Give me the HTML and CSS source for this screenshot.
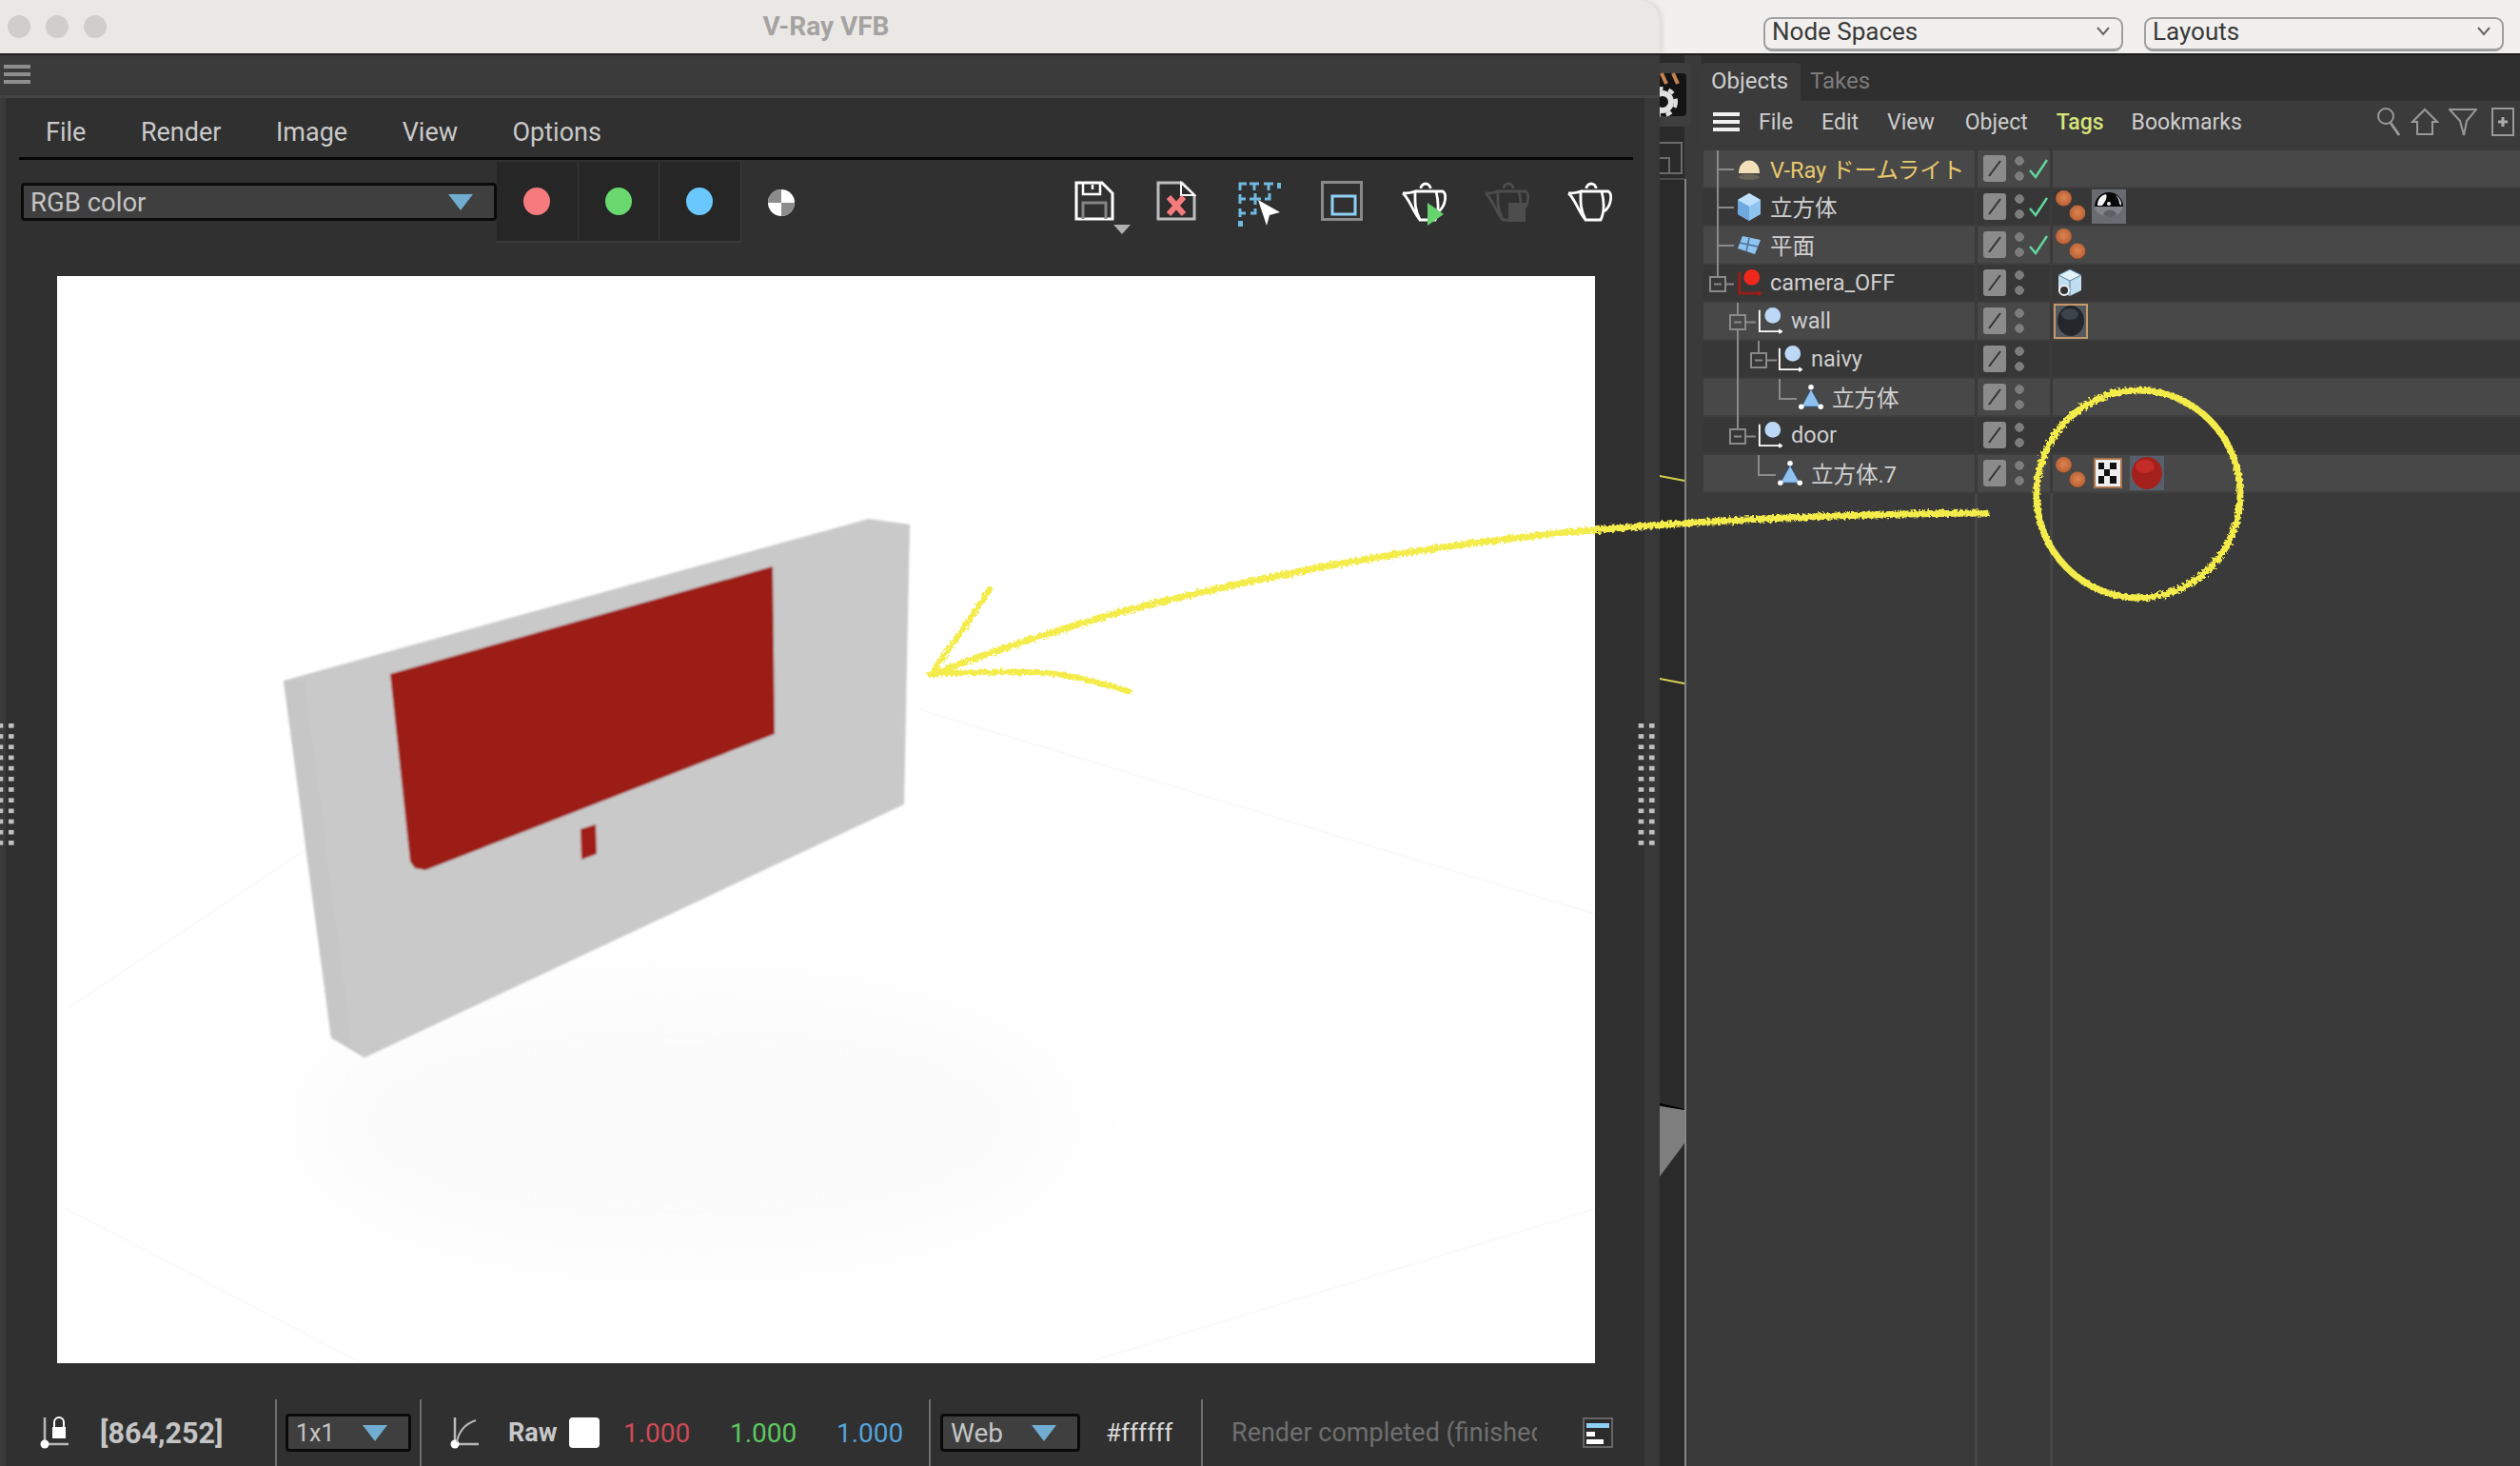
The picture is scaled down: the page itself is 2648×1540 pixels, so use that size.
FILE: index.html
```html
<!DOCTYPE html>
<html lang="en">
<head>
<meta charset="utf-8">
<title>V-Ray VFB</title>
<link rel="stylesheet" href="styles.css">
</head>
<body>
<svg class="defs" width="0" height="0">
  <defs>
    <radialGradient id="ballGrad" cx=".5" cy=".45" r=".55"><stop offset="0" stop-color="#dd8452"/><stop offset=".85" stop-color="#bd6438"/><stop offset="1" stop-color="#5e3620"/></radialGradient>
    <symbol id="balls" viewBox="0 0 32 34"><circle cx="8.500" cy="8.500" r="8.500" fill="url(#ballGrad)"/><circle cx="23" cy="24" r="8.500" fill="url(#ballGrad)"/></symbol>
    <symbol id="null" viewBox="0 0 28 30"><path d="M2 3V27H26M24 25l3 2-3 2" fill="none" stroke="#fff" stroke-width="2"/><circle cx="17" cy="9" r="9" fill="#bcd8f6"/></symbol>
    <symbol id="poly" viewBox="0 0 28 30"><path d="M14 6 3 26H25Z" fill="#8fc0ee" stroke="#2c4a6e" stroke-width="1"/><circle cx="14" cy="4" r="3" fill="#fff"/><circle cx="3" cy="26" r="3" fill="#fff"/><circle cx="25" cy="26" r="3" fill="#fff"/></symbol>
    <symbol id="slash" viewBox="0 0 24 28"><rect width="24" height="28" rx="3" fill="#8b8b8b"/><path d="M6 22 18 6" stroke="#333" stroke-width="2"/></symbol>
    <symbol id="check" viewBox="0 0 20 22"><path d="M1 13 7 20 19 2" fill="none" stroke="#62d69c" stroke-width="2.500"/></symbol>
    <symbol id="teapot" viewBox="0 0 48 42"><path d="M21 7a5 5 0 0 1 10 0M16 10H36M2 12Q10 12 15 10C15 20 14 28 20 40H36C41 30 39 18 37 10H44C48 12 48 24 40 31M2 12C8 16 12 30 20 40" fill="none" stroke="currentColor" stroke-width="2.800"/></symbol>
    <filter id="soft"><feGaussianBlur stdDeviation="1.100"/></filter>
    <filter id="shadow"><feGaussianBlur stdDeviation="60"/></filter>
    <filter id="rough" x="-5%" y="-5%" width="110%" height="110%"><feTurbulence type="fractalNoise" baseFrequency=".35" numOctaves="2" seed="3"/><feDisplacementMap in="SourceGraphic" scale="6"/></filter>
  </defs>
</svg>

<div class="screen">
  <section class="vfb">
    <header class="titlebar">
      <div class="lights"><i class="light"></i><i class="light"></i><i class="light"></i></div>
      <span class="wintitle">V-Ray VFB</span>
    </header>
    <div class="hambar"><div class="ham ham-grey"><i></i><i></i><i></i></div></div>
    <div class="vfbbody">
      <nav class="menu"><span>File</span><span>Render</span><span>Image</span><span>View</span><span>Options</span></nav>
      <div class="toolbar">
        <div class="select rgb"><span>RGB color</span><i class="tri"></i></div>
        <div class="chan"><i class="dot red"></i></div>
        <div class="chan"><i class="dot green"></i></div>
        <div class="chan"><i class="dot blue"></i></div>
        <div class="chan plain"><svg width="28" height="28" viewBox="0 0 28 28"><circle cx="14" cy="14" r="14" fill="#fff"/><path d="M14 14V0A14 14 0 0 0 0 14ZM14 14H28A14 14 0 0 1 14 28Z" fill="#8c8c8c"/></svg></div>
        <div class="tools">
          <div class="tool save">
            <svg width="42" height="42" viewBox="0 0 42 42"><path d="M2 2H29L40 13V40H2Z" fill="none" stroke="#fff" stroke-width="3"/><path d="M9 2V14H27V2M19 4V9" fill="none" stroke="#fff" stroke-width="2.500"/><path d="M9 40V23H33V40" fill="none" stroke="#858585" stroke-width="3"/></svg>
            <i class="savetri"></i>
          </div>
          <div class="tool">
            <svg width="42" height="42" viewBox="0 0 42 42"><path d="M2 2H27L40 15V40H2Z" fill="#2c2c2c" stroke="#bdbdbd" stroke-width="3"/><path d="M26 2V15H40Z" fill="#2c2c2c" stroke="#fff" stroke-width="2"/><path d="M13 17 29 35M29 17 13 35" stroke="#f57b7d" stroke-width="6"/></svg>
          </div>
          <div class="tool">
            <svg width="46" height="48" viewBox="0 0 46 48"><path d="M3 10V3H10M13 3H23M18 3V10M28 3H38M33 3V10M3 14V24M3 19H9M13 19H25M19 13V25M29 19H34V13M3 29V38M3 34H9M19 29V34H14" fill="none" stroke="#6fb9e0" stroke-width="3"/><rect x="42" y="2" width="4" height="6" fill="#6fb9e0"/><rect x="1" y="42" width="5" height="6" fill="#6fb9e0"/><path d="M22 20 45 33 34 36 31 47Z" fill="#fff"/></svg>
          </div>
          <div class="tool">
            <svg width="44" height="42" viewBox="0 0 44 42"><rect x="1.500" y="1.500" width="41" height="39" fill="none" stroke="#8a8a8a" stroke-width="3"/><rect x="12" y="16" width="24" height="19" fill="none" stroke="#8fd0f5" stroke-width="3"/></svg>
          </div>
          <div class="tool teapotbtn">
            <svg width="50" height="46" viewBox="0 0 50 46"><use href="#teapot" width="48" height="42"/><path d="M28 22 45 34 28 46Z" fill="#65d46e"/></svg>
          </div>
          <div class="tool teapotbtn dim">
            <svg width="50" height="46" viewBox="0 0 50 46"><use href="#teapot" width="48" height="42"/><rect x="26" y="22" width="18" height="20" fill="#4d4d4d"/></svg>
          </div>
          <div class="tool teapotbtn">
            <svg width="50" height="46" viewBox="0 0 50 46"><use href="#teapot" width="48" height="42"/></svg>
          </div>
        </div>
      </div>

      <div class="render">
        <svg width="1616" height="1142" viewBox="60 290 1616 1142">
          <rect x="60" y="290" width="1616" height="1142" fill="#fff"/>
          <ellipse cx="720" cy="1180" rx="420" ry="150" fill="#fbfbfb" filter="url(#shadow)"/>
          <path d="M965 745 1676 960M70 1270 380 1432M1140 1432 1676 1270M70 1060 340 880" stroke="#fafafa" stroke-width="2" fill="none"/>
          <g filter="url(#soft)">
            <path d="M298 715 913 545 956 551 950 845 383 1111 348 1090Z" fill="#c9c9c9"/>
            <path d="M298 715 348 1090 383 1111 370 1100 320 715Z" fill="#c6c6c6"/>
            <path d="M410 708 812 595 814 771 447 914 436 912 431 905Z" fill="#9c1a12"/>
            <path d="M610 871 626 866 627 897 611 903Z" fill="#a01c14"/>
          </g>
        </svg>
      </div>

      <footer class="status">
        <svg class="s-lock" width="30" height="34" viewBox="0 0 30 34"><path d="M5 1V30M5 29H30" stroke="#b8b8b8" stroke-width="2.500" fill="none"/><circle cx="5" cy="29" r="4.500" fill="#fff"/><rect x="13" y="11" width="14" height="12" fill="#fff"/><path d="M15 11V6a5 5 0 0 1 10 0V11" fill="none" stroke="#fff" stroke-width="2"/></svg>
        <span class="s-coord">[864,252]</span>
        <i class="sep s-sep1"></i>
        <div class="select small s-1x1"><span>1x1</span><i class="tri"></i></div>
        <i class="sep s-sep2"></i>
        <svg class="s-curve" width="30" height="34" viewBox="0 0 30 34"><path d="M5 1V30M5 29H30" stroke="#b8b8b8" stroke-width="2.500" fill="none"/><circle cx="5" cy="29" r="4.500" fill="#fff"/><path d="M7 27C9 16 15 8 27 4" stroke="#b8b8b8" stroke-width="2" fill="none"/></svg>
        <span class="s-raw">Raw</span>
        <i class="s-swatch"></i>
        <span class="val v-red">1.000</span>
        <span class="val v-green">1.000</span>
        <span class="val v-blue">1.000</span>
        <i class="sep s-sep3"></i>
        <div class="select small s-web"><span>Web</span><i class="tri"></i></div>
        <span class="s-hex">#ffffff</span>
        <i class="sep s-sep4"></i>
        <span class="s-msg">Render completed (finished</span>
        <svg class="s-log" width="32" height="32" viewBox="0 0 32 32"><rect x="1" y="1" width="30" height="30" fill="#2b2b2b" stroke="#666" stroke-width="2"/><rect x="4" y="6" width="24" height="5" fill="#8fd0f5"/><rect x="4" y="15" width="9" height="5" fill="#fff"/><rect x="4" y="23" width="18" height="5" fill="#fff"/></svg>
      </footer>
      <div class="grip grip-l"></div>
      <div class="grip grip-r"></div>
    </div>
  </section>

  <section class="right">
    <div class="topbar">
      <div class="mac-select"><span>Node Spaces</span><svg width="14" height="10" viewBox="0 0 14 10"><path d="M1 1 7 8 13 1" fill="none" stroke="#666" stroke-width="2"/></svg></div>
      <div class="mac-select"><span>Layouts</span><svg width="14" height="10" viewBox="0 0 14 10"><path d="M1 1 7 8 13 1" fill="none" stroke="#666" stroke-width="2"/></svg></div>
    </div>
    <div class="workarea">
      <div class="sliver">
        <svg width="44" height="1482" viewBox="0 0 44 1482">
          <rect width="26" height="1482" fill="#2a2a2a"/>
          <rect x="26" width="18" height="1482" fill="#3a3a3a"/>
          <rect y="8" width="33" height="67" fill="#3e3e3e"/>
          <rect y="19" width="28" height="45" rx="4" fill="#141414"/>
          <path d="M2 19l5 11M14 19l5 11" stroke="#c58350" stroke-width="4"/>
          <circle cx="3" cy="49" r="9" fill="none" stroke="#e0e0e0" stroke-width="6"/>
          <circle cx="3" cy="49" r="14" fill="none" stroke="#e0e0e0" stroke-width="4" stroke-dasharray="6 6"/>
          <path d="M0 92H23V124H0M0 108H10V124" fill="none" stroke="#6a6a6a" stroke-width="2"/>
          <path d="M0 130H26" fill="none" stroke="#4a4a4a" stroke-width="2"/>
          <path d="M0 442 26 447" stroke="#d6d050" stroke-width="2"/>
          <path d="M0 655 26 660" stroke="#d6d050" stroke-width="2"/>
          <path d="M0 1102 26 1108" stroke="#000" stroke-width="2"/>
          <path d="M0 1104 26 1108V1143L0 1178Z" fill="#7e7e7e"/>
          <rect x="26" y="130" width="2" height="1352" fill="#858585"/>
        </svg>
      </div>
      <div class="objects">
        <div class="tabs"><span class="tab on">Objects</span><span class="tab">Takes</span></div>
        <div class="ombar">
          <div class="ham ham-white"><i></i><i></i><i></i></div>
          <span>File</span><span>Edit</span><span>View</span><span class="m-object">Object</span><span class="tags">Tags</span><span class="m-book">Bookmarks</span>
          <div class="omicons">
            <svg width="26" height="32" viewBox="0 0 26 32"><circle cx="10" cy="10" r="8" fill="none" stroke="#999" stroke-width="2"/><path d="M15 17 24 30" stroke="#999" stroke-width="3"/></svg>
            <svg width="30" height="30" viewBox="0 0 30 30"><path d="M15 2 28 15H23V28H7V15H2Z" fill="none" stroke="#999" stroke-width="2"/></svg>
            <svg width="30" height="30" viewBox="0 0 30 30"><path d="M1 2H29L19 14 16 29 12 14Z" fill="none" stroke="#999" stroke-width="2"/></svg>
            <svg class="om-add" width="24" height="30" viewBox="0 0 24 30"><rect x="1" y="1" width="22" height="28" fill="none" stroke="#999" stroke-width="2"/><path d="M12 10V20M7 15H17" stroke="#aaa" stroke-width="3"/></svg>
          </div>
        </div>
        <div class="rows">
          <div class="row alt">
            <div class="cname lv0 vray"><svg class="oi" width="26" height="30" viewBox="0 0 26 30"><path d="M2 20C2 2 24 2 24 20Z" fill="#f2dfb8"/><ellipse cx="13" cy="24" rx="11" ry="3" fill="#6b6256"/></svg><span>V-Ray ドームライト</span></div>
            <div class="cmid"><svg class="sl"><use href="#slash"/></svg><i class="dots"></i><svg class="ck"><use href="#check"/></svg></div>
            <div class="ctags"></div>
          </div>
          <div class="row">
            <div class="cname lv0"><svg class="oi" width="26" height="30" viewBox="0 0 26 30"><path d="M13 1 25 8V23L13 30 1 23V8Z" fill="#8fc4f0"/><path d="M13 1 25 8 13 15 1 8Z" fill="#bfe0fa"/><path d="M13 15V30L1 23V8Z" fill="#6fa8de"/></svg><span>立方体</span></div>
            <div class="cmid"><svg class="sl"><use href="#slash"/></svg><i class="dots"></i><svg class="ck"><use href="#check"/></svg></div>
            <div class="ctags"><svg class="bl"><use href="#balls"/></svg>
              <svg class="thumb" width="36" height="36" viewBox="0 0 36 36"><rect width="36" height="36" fill="#686c70"/><path d="M3 18a15 15 0 0 1 30 0Z" fill="#070707"/><path d="M6 17C6 10 10 6 15 5 17 9 13 14 11 17Z" fill="#f2f2f2"/><path d="M29 15C29 11 27 8 25 6 27 7 32 11 31 17Z" fill="#d8d8d8"/><circle cx="18" cy="15" r="2" fill="#eee"/><path d="M3 18H33C31 32 5 32 3 18Z" fill="#7f8286"/><path d="M12 26C14 20 24 20 26 26 22 30 16 30 12 26Z" fill="#5c5f63"/></svg></div>
          </div>
          <div class="row alt">
            <div class="cname lv0"><svg class="oi" width="26" height="24" viewBox="0 0 26 24"><path d="M6 3 25 7 19 22 1 16Z" fill="#8fc4f0"/><path d="M13 5 10 19M3 10 22 14" stroke="#4a6f96" stroke-width="1.500"/></svg><span>平面</span></div>
            <div class="cmid"><svg class="sl"><use href="#slash"/></svg><i class="dots"></i><svg class="ck"><use href="#check"/></svg></div>
            <div class="ctags"><svg class="bl"><use href="#balls"/></svg></div>
          </div>
          <div class="row">
            <div class="cname lv0"><svg class="oi" width="26" height="30" viewBox="0 0 28 30"><path d="M3 3V27H26M24 25l3 2-3 2" fill="none" stroke="#9c1d14" stroke-width="3"/><circle cx="17" cy="9" r="9" fill="#f0281c"/></svg><span>camera_OFF</span></div>
            <div class="cmid"><svg class="sl"><use href="#slash"/></svg><i class="dots"></i></div>
            <div class="ctags"><svg class="cubetag" width="26" height="30" viewBox="0 0 26 30"><path d="M13 1 25 7V23L13 29 1 23V7Z" fill="#bfdff0"/><path d="M13 1 25 7 13 13 1 7Z" fill="#e4f2fa" stroke="#5a7d95"/><path d="M13 13V29" stroke="#5a7d95"/><circle cx="7" cy="23" r="5" fill="#333" stroke="#eee" stroke-width="2"/></svg></div>
          </div>
          <div class="row alt">
            <div class="cname lv1"><svg class="oi" width="26" height="30"><use href="#null"/></svg><span>wall</span></div>
            <div class="cmid"><svg class="sl"><use href="#slash"/></svg><i class="dots"></i></div>
            <div class="ctags tight"><svg class="thumb" width="36" height="37" viewBox="0 0 36 37"><rect x="1" y="1" width="34" height="35" fill="#55585c" stroke="#c49a6c" stroke-width="2"/><ellipse cx="18" cy="18" rx="14" ry="16" fill="#23272c"/><ellipse cx="17" cy="11" rx="9" ry="6" fill="#3e444b"/></svg></div>
          </div>
          <div class="row">
            <div class="cname lv2"><svg class="oi" width="26" height="30"><use href="#null"/></svg><span>naivy</span></div>
            <div class="cmid"><svg class="sl"><use href="#slash"/></svg><i class="dots"></i></div>
            <div class="ctags"></div>
          </div>
          <div class="row alt">
            <div class="cname lv3"><svg class="oi" width="26" height="30"><use href="#poly"/></svg><span>立方体</span></div>
            <div class="cmid"><svg class="sl"><use href="#slash"/></svg><i class="dots"></i></div>
            <div class="ctags"></div>
          </div>
          <div class="row">
            <div class="cname lv1"><svg class="oi" width="26" height="30"><use href="#null"/></svg><span>door</span></div>
            <div class="cmid"><svg class="sl"><use href="#slash"/></svg><i class="dots"></i></div>
            <div class="ctags"></div>
          </div>
          <div class="row alt">
            <div class="cname lv2"><svg class="oi" width="26" height="30"><use href="#poly"/></svg><span>立方体.7</span></div>
            <div class="cmid"><svg class="sl"><use href="#slash"/></svg><i class="dots"></i></div>
            <div class="ctags wide"><svg class="bl"><use href="#balls"/></svg>
              <svg class="thumb" width="30" height="32" viewBox="0 0 30 32"><rect x="1" y="1" width="28" height="30" fill="#eee" stroke="#a9744c" stroke-width="2"/><path d="M5 5H11V12H5ZM17 5H24V12H17ZM11 12H17V19H11ZM5 19H11V27H5ZM17 19H24V27H17Z" fill="#111"/></svg>
              <svg class="thumb" width="36" height="36" viewBox="0 0 36 36"><rect width="36" height="36" fill="#55606c"/><ellipse cx="18" cy="18" rx="16" ry="17" fill="#a3201c"/><ellipse cx="16" cy="11" rx="10" ry="7" fill="#c42c28"/></svg></div>
          </div>
          <div class="fill">
            <div class="col-name"></div><div class="col-mid"></div><div class="col-tags"></div>
          </div>
          <svg class="treelines" width="120" height="370" viewBox="1790 158 120 370">
            <g fill="none" stroke="#8a8a8a" stroke-width="2">
              <path d="M1805 158V290M1805 178H1822M1805 218H1822M1805 258H1822"/>
              <rect x="1797" y="291" width="16" height="15"/><path d="M1801 298.500H1809M1813 298.500H1822"/>
              <path d="M1826 318V330"/><rect x="1818" y="331" width="16" height="15"/><path d="M1822 338.500H1830M1834 338.500H1845M1826 346V450"/>
              <path d="M1848 358V370"/><rect x="1840" y="371" width="16" height="15"/><path d="M1844 378.500H1852M1856 378.500H1867"/>
              <path d="M1870 398V419H1888"/>
              <rect x="1818" y="451" width="16" height="15"/><path d="M1822 458.500H1830M1834 458.500H1845"/>
              <path d="M1848 478V499H1866"/>
            </g>
          </svg>
        </div>
      </div>
    </div>
  </section>

  <svg class="annot" width="2648" height="1540" viewBox="0 0 2648 1540">
    <g fill="none" stroke="#f4ec4c" stroke-linecap="round" stroke-linejoin="round" filter="url(#rough)">
      <path d="M2087 539C1950 540 1800 546 1672 557C1500 572 1350 600 1200 637C1130 655 1040 685 978 709" stroke-width="7"/>
      <path d="M1040 619C1020 650 995 685 978 708C1020 706 1070 704 1110 708C1140 712 1165 720 1186 726" stroke-width="6"/>
      <ellipse cx="2247" cy="519" rx="107" ry="109" stroke-width="7"/>
    </g>
  </svg>
</div>
</body>
</html>
```

FILE: styles.css
```css
* { box-sizing: border-box; }
html, body { margin: 0; padding: 0; }
body { width: 2648px; height: 1540px; overflow: hidden; background: #f2f0ee; font-family: Roboto, "Noto Sans CJK JP", sans-serif; }
i { display: block; }
.defs { position: absolute; }
.screen { position: relative; display: flex; width: 2648px; height: 1540px; }

/* V-Ray window */
.vfb { width: 1744px; height: 1540px; flex: none; display: flex; flex-direction: column; position: relative; z-index: 2; }
.titlebar { height: 56px; flex: none; background: #eae8e5; border-top-right-radius: 22px; position: relative; display: flex; align-items: center; justify-content: center; padding: 0 8px 2px 0; box-shadow: 2px 0 6px rgba(0,0,0,.12); }
.lights { position: absolute; left: 8px; top: 16px; display: flex; gap: 16px; }
.light { width: 24px; height: 24px; border-radius: 50%; background: #d0cdca; }
.wintitle { font-size: 28px; font-weight: 700; color: #a5a3a1; }
.hambar { height: 47px; flex: none; background: #3b3b3b; border-top: 2px solid #222; border-bottom: 3px solid #444; padding: 10px 0 0 4px; }
.ham { display: flex; flex-direction: column; justify-content: space-between; width: 28px; height: 20px; }
.ham i { height: 4px; }
.ham-grey i { background: #8e8e8e; }
.ham-white i { background: #f0f0f0; }

.vfbbody { flex: 1; background: #303030; display: flex; flex-direction: column; position: relative; border-left: 6px solid #3a3a3a; border-right: 16px solid #383838; }
.menu { margin-left: 14px; width: 1696px; height: 65px; border-bottom: 3px solid #050505; padding: 19px 0 0 28px; display: flex; gap: 57.500px; font-size: 27px; line-height: 34px; color: #c9c9c9; }

.toolbar { height: 122px; flex: none; display: flex; align-items: flex-start; padding: 2px 0 0 16px; }
.select { display: flex; align-items: center; justify-content: space-between; background: #3f3f3f; border: 3px solid #0a0a0a; border-radius: 4px; color: #c4c4c4; font-size: 28px; }
.tri { width: 0; height: 0; flex: none; border-left: 13px solid transparent; border-right: 13px solid transparent; border-top: 17px solid #70add0; }
.rgb { width: 500px; height: 40px; margin-top: 22px; padding: 0 22px 0 7px; font-size: 27.500px; }
.chan { width: 85.500px; height: 85px; background: #262626; border-bottom: 2px solid #3a3a3a; border-right: 1px solid #3a3a3a; display: flex; align-items: center; justify-content: center; }
.chan.plain { background: none; border: 0; }
.dot { width: 28px; height: 29px; border-radius: 50%; }
.red { background: #f57b7d; }
.green { background: #68d86f; }
.blue { background: #6ac8ff; }
.tools { margin-left: auto; margin-right: 14px; display: flex; color: #fff; }
.tool { width: 87px; height: 70px; padding-top: 20px; display: flex; justify-content: center; position: relative; }
.tool.save { padding-left: 2px; }
.teapotbtn { padding-top: 21px; }
.teapotbtn svg { color: #fff; }
.dim svg { color: #4d4d4d; }
.savetri { position: absolute; left: 65px; top: 66px; width: 0; height: 0; border-left: 9px solid transparent; border-right: 9px solid transparent; border-top: 10px solid #b0b0b0; }

.render { width: 1616px; height: 1142px; flex: none; margin-left: 54px; }
.render svg { display: block; }

.status { height: 70px; margin-top: 38px; flex: none; display: flex; align-items: center; padding-left: 36px; font-size: 28px; color: #c8c8c8; }
.sep { width: 2px; height: 70px; background: #6e6e6e; flex: none; }
.small { height: 40px; padding: 0 22px 0 8px; flex: none; }
.s-coord { margin-left: 33px; width: 130px; font-size: 30.500px; font-weight: 700; color: #c4c4c4; white-space: nowrap; }
.s-sep1 { margin-left: 54px; }
.s-1x1 { margin-left: 9px; width: 132px; font-size: 25px; }
.s-sep2 { margin-left: 9px; }
.s-curve { margin-left: 30px; }
.s-raw { margin-left: 31px; width: 52px; font-weight: 700; font-size: 27px; }
.s-swatch { margin-left: 12px; width: 32px; height: 32px; background: #fff; border-radius: 4px; }
.val { width: 69px; margin-left: 43px; }
.v-red { margin-left: 25px; color: #cf4a55; }
.v-green { color: #5cc860; }
.v-blue { color: #55a3dc; }
.s-sep3 { margin-left: 28px; }
.s-web { margin-left: 10px; width: 147px; }
.s-hex { margin-left: 27px; width: 69px; font-size: 26px; color: #d8d8d8; }
.s-sep4 { margin-left: 31px; }
.s-msg { margin-left: 30px; width: 321px; white-space: nowrap; overflow: hidden; font-size: 27px; color: #6f6f6f; }
.s-log { margin-left: 48px; flex: none; }

.grip { position: absolute; top: 657px; width: 23px; height: 134px; background-image: conic-gradient(at 50% 40%, #c0c0c0 25%, transparent 0); background-size: 11.300px 11.200px; }
.grip-l { left: -14px; }
.grip-r { right: -11px; }

/* Right */
.right { flex: 1; display: flex; flex-direction: column; min-width: 0; }
.topbar { height: 56px; flex: none; background: #f2f0ee; display: flex; gap: 22px; padding: 18px 17px 0 109px; }
.mac-select { flex: 1; height: 36px; border: 2px solid #a0a0a0; border-bottom-width: 3px; border-radius: 9px; display: flex; align-items: center; justify-content: space-between; padding: 0 12px 5px 7px; font-size: 26px; color: #3a3a3a; }
.workarea { flex: 1; display: flex; background: #2e2e2e; border-top: 2px solid #1c1c1c; min-height: 0; }
.sliver { width: 44px; flex: none; }
.sliver svg { display: block; }
.objects { flex: 1; display: flex; flex-direction: column; min-width: 0; background: #3a3a3a; }
.tabs { height: 48px; flex: none; background: #2f2f2f; display: flex; align-items: flex-end; font-size: 24px; padding-top: 8px; }
.tab { height: 40px; display: flex; align-items: center; padding: 0 13px 2px 10px; color: #7c7c7c; }
.tab.on { background: #3b3b3b; color: #cfcfcf; width: 104px; border-radius: 4px 4px 0 0; }
.ombar { height: 46px; flex: none; background: #3b3b3b; display: flex; align-items: center; gap: 30px; padding: 0 0 2px 12px; font-size: 23px; color: #cdcdcd; }
.ombar .ham { margin-right: -10px; }
.ombar .tags { color: #d6e47a; font-weight: 500; }
.m-object { margin-left: 2px; }
.m-book { margin-left: -1px; }
.omicons { margin-left: auto; display: flex; gap: 10px; padding-right: 6px; align-items: center; }
.om-add { margin-left: 5px; }
.rows { flex: 1; position: relative; display: flex; flex-direction: column; padding: 6px 0 0 2px; }
.row { height: 40px; flex: none; display: grid; grid-template-columns: 285px 76px 1fr; column-gap: 3px; }
.row > div { background: #373737; border-bottom: 2px solid #3d3d3d; }
.row.alt > div { background: #484848; border-bottom-color: #404040; }
.cname { display: flex; align-items: center; gap: 9px; padding-bottom: 1px; font-size: 23.500px; color: #cfcfcf; white-space: nowrap; }
.cname .oi { margin-top: 1px; }
.cname.vray { color: #e8c96c; }
.lv0 { padding-left: 35px; }
.lv1 { padding-left: 57px; }
.lv2 { padding-left: 78px; }
.lv3 { padding-left: 100px; }
.oi { flex: none; }
.cmid { display: flex; align-items: center; padding-left: 6px; }
.sl { width: 24px; height: 28px; flex: none; }
.dots { width: 10px; height: 26px; margin-left: 9px; flex: none; background-image: radial-gradient(circle at 5px 5px, #7c7c7c 4.500px, transparent 5px), radial-gradient(circle at 5px 21px, #7c7c7c 4.500px, transparent 5px); }
.ck { width: 20px; height: 22px; margin-left: 5px; flex: none; }
.ctags { display: flex; align-items: center; gap: 6px; padding-left: 3px; }
.ctags.tight { padding-left: 1px; }
.ctags.wide { gap: 8px; }
.bl { width: 32px; height: 34px; flex: none; }
.thumb, .cubetag { flex: none; }
.cubetag { margin-left: 2px; }
.fill { flex: 1; display: grid; grid-template-columns: 285px 76px 1fr; column-gap: 3px; background: #474747; }
.fill > div { background: #3a3a3a; }
.treelines { position: absolute; left: 2px; top: 6px; pointer-events: none; }
.annot { position: absolute; left: 0; top: 0; z-index: 5; pointer-events: none; }
```
